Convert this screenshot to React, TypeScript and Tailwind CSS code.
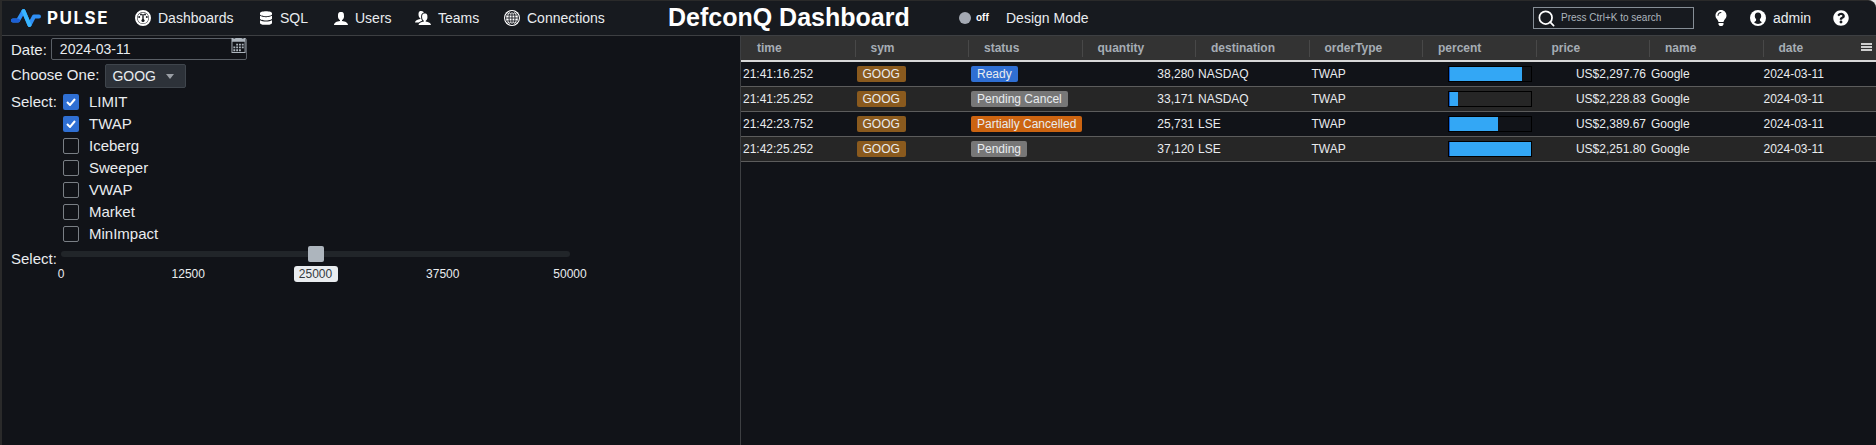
import { Search } from 'lucide-react';
import { FaDatabase, FaLightbulb, FaQuestionCircle } from 'react-icons/fa';
import { ImCalendar, ImUser, ImUsers } from 'react-icons/im';

const columns = ['time', 'sym', 'status', 'quantity', 'destination', 'orderType', 'percent', 'price', 'name', 'date'];

const rows = [
  { time: '21:41:16.252', status: 'Ready', color: 'bg-[#2f6fd3]', qty: '38,280', dest: 'NASDAQ', pct: 90, price: 'US$2,297.76' },
  { time: '21:41:25.252', status: 'Pending Cancel', color: 'bg-[#777777]', qty: '33,171', dest: 'NASDAQ', pct: 12, price: 'US$2,228.83' },
  { time: '21:42:23.752', status: 'Partially Cancelled', color: 'bg-[#cc6411]', qty: '25,731', dest: 'LSE', pct: 60, price: 'US$2,389.67' },
  { time: '21:42:25.252', status: 'Pending', color: 'bg-[#777777]', qty: '37,120', dest: 'LSE', pct: 100, price: 'US$2,251.80' },
];

const options = [
  { label: 'LIMIT', checked: true },
  { label: 'TWAP', checked: true },
  { label: 'Iceberg', checked: false },
  { label: 'Sweeper', checked: false },
  { label: 'VWAP', checked: false },
  { label: 'Market', checked: false },
  { label: 'MinImpact', checked: false },
];

const ticks = ['0', '12500', '25000', '37500', '50000'];

function PulseMark() {
  return (
    <svg width="30" height="20" viewBox="0 0 30 20" fill="none">
      <path d="M2 12.500h5L12.500 3l6 14 4.500-8.500h5" stroke="#2f8ff5" strokeWidth="4" strokeLinejoin="round" strokeLinecap="round" />
      <path d="M2 12.500h5" stroke="#1c5fd6" strokeWidth="4" strokeLinecap="round" />
      <path d="M12.500 3l6 14" stroke="#38b6ff" strokeWidth="4" strokeLinecap="round" />
    </svg>
  );
}

function GaugeIcon() {
  return (
    <svg width="16" height="16" viewBox="0 0 16 16">
      <circle cx="8" cy="8" r="7" fill="none" stroke="#fff" strokeWidth="2" />
      <circle cx="8" cy="8" r="5.5" fill="#fff" />
      <circle cx="4.2" cy="7" r="1" fill="#171a1f" />
      <circle cx="6" cy="4.4" r="1" fill="#171a1f" />
      <circle cx="10" cy="4.4" r="1" fill="#171a1f" />
      <circle cx="11.8" cy="7" r="1" fill="#171a1f" />
      <path d="M8 4v6" stroke="#171a1f" strokeWidth="1.4" />
      <circle cx="8" cy="10.5" r="1.6" fill="#171a1f" />
    </svg>
  );
}

function GlobeIcon() {
  return (
    <svg width="16" height="16" viewBox="0 0 16 16">
      <circle cx="8" cy="8" r="8" fill="#fff" />
      <g fill="none" stroke="#171a1f" strokeWidth="0.9">
        <circle cx="8" cy="8" r="6.5" />
        <ellipse cx="8" cy="8" rx="3" ry="6.5" />
        <path d="M8 1.5v13M1.5 8h13M2.5 5h11M2.5 11h11" />
      </g>
    </svg>
  );
}

function AdminIcon() {
  return (
    <svg width="16" height="16" viewBox="0 0 16 16">
      <circle cx="8" cy="8" r="8" fill="#fff" />
      <path d="M8 2.500c2.100 0 3.200 1.500 3.200 3.500 0 1.300-.5 2.400-1.300 3.100v1.200c0 .9 1.100 1.300 2.100 1.900A6.200 6.200 0 0 1 8 14a6.200 6.200 0 0 1-4-1.800c1-.6 2.100-1 2.100-1.900V9.100C5.300 8.400 4.800 7.300 4.800 6c0-2 1.100-3.500 3.200-3.500z" fill="#171a1f" />
    </svg>
  );
}

function Check() {
  return (
    <svg width="10" height="8" viewBox="0 0 10 8" fill="none">
      <path d="M1 4l3 3 5-6" stroke="#fff" strokeWidth="2" />
    </svg>
  );
}

function NavBar() {
  return (
    <header className="flex h-[35px] shrink-0 items-center rounded-tr-[8px] border-b border-[#3d3f42] bg-[#171a1f] text-sm text-[#e9ecef]">
      <div className="ml-[9px] flex w-[124px] items-center gap-[6px]">
        <PulseMark />
        <span className="font-['Inter',sans-serif] text-[17px] leading-none font-bold tracking-[1.5px] text-white">PULSE</span>
      </div>
      <nav className="flex items-center">
        <a className="flex w-[125px] items-center gap-[7px]"><GaugeIcon />Dashboards</a>
        <a className="flex w-[73px] items-center gap-2"><FaDatabase className="h-4 w-3 text-white" />SQL</a>
        <a className="flex w-[82px] items-center gap-[6px]"><ImUser className="h-4 w-4 text-white" />Users</a>
        <a className="flex w-[89px] items-center gap-[7px]"><ImUsers className="h-4 w-4 text-white" />Teams</a>
        <a className="flex w-[102px] items-center gap-[7px]"><GlobeIcon />Connections</a>
      </nav>
      <h1 className="mb-[2px] ml-[62px] w-[291px] text-[25px] leading-none font-bold text-white">DefconQ Dashboard</h1>
      <div className="flex w-[47px] items-center gap-[5px]">
        <span className="h-3 w-3 rounded-full bg-[#a4a9b3]" />
        <span className="text-[10px] font-bold text-white">off</span>
      </div>
      <span>Design Mode</span>
      <div className="ml-auto flex items-center">
        <div className="flex h-[22px] w-[161px] items-center gap-[5px] border border-[#868e96] px-[3px]">
          <Search size={19} strokeWidth={2.2} className="text-white" />
          <span className="text-[10px] text-[#adb5bd]">Press Ctrl+K to search</span>
        </div>
        <FaLightbulb className="ml-[21px] h-4 w-[12px] text-white" />
        <div className="ml-[23px] flex w-[83px] items-center gap-[7px]">
          <AdminIcon />
          <span>admin</span>
        </div>
        <FaQuestionCircle className="mr-[27px] h-4 w-4 text-white" />
      </div>
    </header>
  );
}

function FilterPanel() {
  return (
    <section className="w-[738px] shrink-0 pt-[2px] pl-[9px] text-[15px] leading-none text-[#e9ecef]">
      <div className="flex h-[22px] items-center gap-1">
        <span className="mt-[1px]">Date:</span>
        <div className="relative flex h-[22px] w-[196px] items-center rounded-[2px] border border-[#5a5f66] pl-2 text-sm">
          2024-03-11
          <ImCalendar className="absolute -top-px -right-px h-[15px] w-4 text-[#adb5bd]" />
        </div>
      </div>
      <div className="mt-1 flex h-6 items-start gap-[6px]">
        <span className="mt-[3px]">Choose One:</span>
        <div className="flex h-6 w-[81px] items-center rounded-[2px] border border-[#3f454c] bg-[#2d3239] pl-[6px] text-sm">
          GOOG
          <span className="ml-[10px] h-0 w-0 border-x-4 border-t-[5px] border-x-transparent border-t-[#9a9fa5]" />
        </div>
      </div>
      <div className="mt-[6px] flex">
        <span className="w-[52px]">Select:</span>
        <ul>
          {options.map((option) => (
            <li key={option.label} className="flex h-[22px] items-start gap-[10px]">
              <span
                className={
                  option.checked
                    ? 'flex h-4 w-4 items-center justify-center rounded-[2px] bg-[#2f6fd3]'
                    : 'h-4 w-4 rounded-[2px] border border-[#7a7f85]'
                }
              >
                {option.checked && <Check />}
              </span>
              <span className="-mt-px flex h-4 items-center">{option.label}</span>
            </li>
          ))}
        </ul>
      </div>
      <div className="flex">
        <span className="mt-[3px] w-[50px]">Select:</span>
        <div className="w-[509px]">
          <div className="relative mt-[3px] h-[6px] rounded-[3px] bg-[#212529]">
            <span className="absolute -top-[5px] left-[247px] h-4 w-4 rounded-[2px] bg-[#adb5bd]" />
          </div>
          <div className="mx-[-22px] mt-[9px] flex justify-between text-xs">
            {ticks.map((tick) => (
              <span key={tick} className="flex h-4 w-11 items-center justify-center">
                {tick === '25000' ? (
                  <span className="flex h-4 w-11 items-center justify-center rounded-[3px] bg-[#e9ecef] text-[#343a40]">{tick}</span>
                ) : (
                  tick
                )}
              </span>
            ))}
          </div>
        </div>
      </div>
    </section>
  );
}

function Badge({ className, children }: { className: string; children: string }) {
  return (
    <span className={`inline-flex h-4 items-center rounded-[2px] px-[6px] whitespace-nowrap text-[#e9ecef] ${className}`}>{children}</span>
  );
}

function Grid() {
  return (
    <section className="min-w-0 flex-1 border-l border-[#3d3f42] text-xs text-[#e9ecef]">
      <div className="relative grid h-[26px] grid-cols-10 border-b-2 border-[#d8d8d8] bg-[#333333] font-bold text-[#a6adb5]">
        {columns.map((column, i) => (
          <div key={column} className="flex items-center pl-4">
            {i > 0 && <span className="absolute h-[17px] w-px -translate-x-4 bg-[#484848]" />}
            {column}
          </div>
        ))}
        <div className="absolute top-[7px] right-[4px] flex w-[11px] flex-col gap-[1px]">
          <span className="h-[2px] bg-[#cfcfcf]" />
          <span className="h-[2px] bg-[#cfcfcf]" />
          <span className="h-[2px] bg-[#cfcfcf]" />
        </div>
      </div>
      {rows.map((row, i) => (
        <div
          key={row.time}
          className={`grid h-[25px] grid-cols-10 items-center border-b border-[#5c5c5c] ${i % 2 ? 'bg-[#262626]' : 'bg-[#111318]'}`}
        >
          <div className="pl-[2px]">{row.time}</div>
          <div className="pl-[2px]"><Badge className="bg-[#8a5a1e]">GOOG</Badge></div>
          <div className="pl-[3px]"><Badge className={row.color}>{row.status}</Badge></div>
          <div className="pr-[1px] text-right">{row.qty}</div>
          <div className="pl-[3px]">{row.dest}</div>
          <div className="pl-[3px]">TWAP</div>
          <div className="flex justify-end pr-[4px]">
            <div className="h-4 w-[84px] border border-black">
              <div className="h-full border-l border-[#0d5fd0] bg-[#33a7f5]" style={{ width: `${row.pct}%` }} />
            </div>
          </div>
          <div className="pr-[3px] text-right">{row.price}</div>
          <div className="pl-[2px]">Google</div>
          <div className="pl-[1px]">2024-03-11</div>
        </div>
      ))}
    </section>
  );
}

export default function App() {
  return (
    <div className="h-[445px] w-full overflow-hidden bg-[#e8e8e8] font-['Liberation_Sans',Arial,sans-serif]">
      <div className="flex h-full flex-col overflow-hidden rounded-tr-[8px] border-t border-l-2 border-[#2a2a2a] bg-[#111318]">
        <NavBar />
        <main className="flex min-h-0 flex-1">
          <FilterPanel />
          <Grid />
        </main>
      </div>
    </div>
  );
}
